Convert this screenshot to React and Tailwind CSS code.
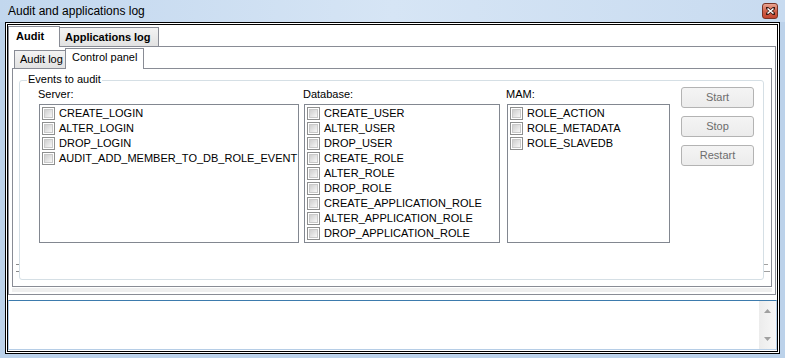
const SERVER = ["CREATE_LOGIN", "ALTER_LOGIN", "DROP_LOGIN", "AUDIT_ADD_MEMBER_TO_DB_ROLE_EVENT"];
const DATABASE = [
  "CREATE_USER",
  "ALTER_USER",
  "DROP_USER",
  "CREATE_ROLE",
  "ALTER_ROLE",
  "DROP_ROLE",
  "CREATE_APPLICATION_ROLE",
  "ALTER_APPLICATION_ROLE",
  "DROP_APPLICATION_ROLE",
];
const MAM = ["ROLE_ACTION", "ROLE_METADATA", "ROLE_SLAVEDB"];

function CheckBox() {
  return (
    <span className="flex h-[13px] w-[13px] shrink-0 border border-[#8e8f8f] bg-white p-px">
      <span className="flex-1 border border-[#c9c9c9] bg-linear-to-br from-[#cfcfcf] via-[#e2e2e2] to-[#f7f7f7]" />
    </span>
  );
}

function CheckList({ label, items, className }) {
  return (
    <div className={["flex flex-col pt-[7px]", className].join(" ")}>
      <div className="h-[13px] leading-[13px] -ml-px">{label}</div>
      <div className="mt-[3px] h-[139px] border border-[#828790] bg-white pt-px">
        {items.map((x) => (
          <div key={x} className="flex h-[15px] items-center gap-[4px] pl-[2px] leading-[15px]">
            <CheckBox />
            <span className="whitespace-nowrap">{x}</span>
          </div>
        ))}
      </div>
    </div>
  );
}

function Btn({ children }) {
  return (
    <button
      type="button"
      disabled
      className="h-[21px] w-[73px] rounded-[3px] border border-[#b3b3b3] bg-linear-to-b from-[#f4f4f4] to-[#ececec] text-[11px] leading-[19px] text-[#6d6d6d]"
    >
      {children}
    </button>
  );
}

export default function App() {
  return (
    <div className="flex h-[358px] w-[785px] flex-col overflow-hidden bg-[#bcd2ea] font-['Liberation_Sans',Arial,sans-serif] text-[11px] text-black">
      {/* title bar */}
      <div className="flex h-[22px] shrink-0 items-center bg-linear-to-r from-[#c2d7ee] via-[#d6e5f5] to-[#c8dbf0] pl-[8px] pr-[7px]">
        <span className="flex-1 text-[12px] leading-[14px] text-black">Audit and applications log</span>
        <div className="flex h-[16px] w-[16px] items-center justify-center rounded-[3px] border border-[#7a3325] bg-linear-to-b from-[#e8a593] via-[#d0614a] to-[#c2452f]">
          <svg width="9" height="8" viewBox="0 0 9 8">
            <path d="M1 1 L8 7 M8 1 L1 7" stroke="#3a1a14" strokeWidth="3" strokeLinecap="square" />
            <path d="M1.5 1.5 L7.5 6.5 M7.5 1.5 L1.5 6.5" stroke="#ffffff" strokeWidth="1.6" />
          </svg>
        </div>
      </div>

      {/* window frame */}
      <div className="mx-[5px] mb-[4px] flex flex-1 border border-black bg-white p-px">
        <div className="flex flex-1 flex-col border border-black bg-white pt-px">
          {/* outer tabs */}
          <div className="flex h-[20px] items-end">
            <div className="z-10 -mb-px h-[21px] w-[52px] border border-b-0 border-[#898c95] bg-white pl-[7px] font-bold leading-[18px]">
              Audit
            </div>
            <div className="h-[19px] w-[99px] border border-b-0 border-l-0 border-[#898c95] bg-linear-to-b from-[#f3f3f3] to-[#e2e2e2] pl-[5px] font-bold leading-[19px]">
              Applications log
            </div>
          </div>

          {/* outer page */}
          <div className="mr-px flex h-[249px] flex-col border border-[#898c95] bg-white pl-[3px] pr-[3px]">
            {/* inner tabs */}
            <div className="flex h-[21px] items-end pl-[2px] pt-px">
              <div className="h-[18px] w-[51px] border border-b-0 border-r-0 border-[#898c95] bg-linear-to-b from-[#f3f3f3] to-[#e2e2e2] pl-[5px] leading-[17px]">
                Audit log
              </div>
              <div className="z-10 -mb-px h-[21px] w-[79px] border border-b-0 border-[#898c95] bg-white pl-[6px] leading-[17px]">
                Control panel
              </div>
            </div>

            {/* inner page */}
            <div className="relative flex h-[219px] border border-[#898c95] bg-white pb-[6px] pl-[6px] pr-[7px] pt-[11px]">
              <div className="absolute left-[3px] top-[195px] h-px w-[3px] bg-[#8a8a8a]" />
              <div className="absolute left-[3px] top-[202px] h-px w-[3px] bg-[#8a8a8a]" />
              <div className="absolute right-[3px] top-[195px] h-px w-[4px] bg-[#a0a0a0]" />
              <div className="absolute right-[1px] top-[202px] h-px w-[6px] bg-[#a0a0a0]" />

              {/* group box */}
              <div className="relative flex flex-1 rounded-[3px] border border-[#d5dfe5] pl-[19px]">
                <span className="absolute -top-[8px] left-[7px] bg-white px-px leading-[13px]">Events to audit</span>
                <CheckList label="Server:" items={SERVER} className="w-[260px]" />
                <CheckList label="Database:" items={DATABASE} className="ml-[5px] w-[196px]" />
                <CheckList label="MAM:" items={MAM} className="ml-[7px] w-[163px]" />
                <div className="ml-[11px] flex flex-col gap-[8px] pt-[6px]">
                  <Btn>Start</Btn>
                  <Btn>Stop</Btn>
                  <Btn>Restart</Btn>
                </div>
              </div>
            </div>
            <div className="mt-px h-[4px] bg-[#efefef]" />
          </div>

          {/* log box */}
          <div className="mt-[5px] flex h-[50px] border border-[#b5cde6] border-t-[#3d7bad] bg-white">
            <div className="flex-1" />
            <div className="flex w-[17px] flex-col items-center justify-between bg-linear-to-r from-[#ececec] to-[#f7f7f7] py-[8px]">
              <svg width="7" height="4" viewBox="0 0 7 4">
                <path d="M0 4 L3.5 0 L7 4 Z" fill="#a0a0a0" />
              </svg>
              <svg width="7" height="4" viewBox="0 0 7 4">
                <path d="M0 0 L7 0 L3.5 4 Z" fill="#a0a0a0" />
              </svg>
            </div>
          </div>
        </div>
      </div>
    </div>
  );
}
